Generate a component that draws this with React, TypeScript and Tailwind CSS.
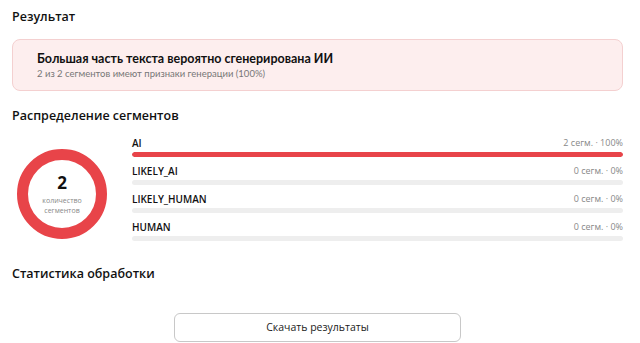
import React from "react";

const rows = [
  { label: "AI", count: 2, pct: 100 },
  { label: "LIKELY_AI", count: 0, pct: 0 },
  { label: "LIKELY_HUMAN", count: 0, pct: 0 },
  { label: "HUMAN", count: 0, pct: 0 },
];

export default function App() {
  return (
    <div className="w-[640px] h-[343px] overflow-hidden bg-white text-[#111]" style={{ fontFamily: '"Open Sans", "Noto Sans", sans-serif' }}>
      <div className="w-[611px] ml-3 flex flex-col">
        <h2 className="text-[12.5px] font-semibold leading-[18px] mt-[8px]">Результат</h2>
        <div className="mt-[13px] h-[52px] rounded-[8px] border border-[#f4d0d0] bg-[#fdeeee] pl-[24px] flex flex-col justify-center" style={{ fontFamily: 'Lato, "Open Sans", sans-serif' }}>
          <div className="text-[12.5px] font-bold leading-[16px]">Большая часть текста вероятно сгенерирована ИИ</div>
          <div className="text-[9.5px] leading-[13px] text-[#777]">2 из 2 сегментов имеют признаки генерации (100%)</div>
        </div>
        <h2 className="text-[12.5px] font-semibold leading-[18px] mt-[16px]">Распределение сегментов</h2>
        <div className="flex mt-[9px]">
          <div className="w-[120px] flex items-start pt-[15px] pl-[5px]">
            <div className="relative w-[90px] h-[90px] rounded-full border-[11px] border-[#e84449] flex flex-col items-center justify-center">
              <div className="text-[17px] font-bold leading-[20px]">2</div>
              <div className="text-[7px] leading-[10px] text-[#888] text-center mt-[3px]">количество<br />сегментов</div>
            </div>
          </div>
          <div className="flex-1 flex flex-col">
            {rows.map((r) => (
              <div key={r.label} className="h-[28px] flex flex-col">
                <div className="flex justify-between items-center h-[18px]">
                  <span className="text-[10px] font-semibold">{r.label}</span>
                  <span className="text-[9px] text-[#888]">{r.count} сегм. · {r.pct}%</span>
                </div>
                <div className="h-[5px] rounded-full bg-[#eeeeee] overflow-hidden">
                  <div className="h-full rounded-full bg-[#e84449]" style={{ width: `${r.pct}%` }} />
                </div>
              </div>
            ))}
          </div>
        </div>
        <h2 className="text-[12.5px] font-semibold leading-[18px] mt-[19px]">Статистика обработки</h2>
        <div className="flex justify-center mt-[30px]">
          <button className="w-[287px] h-[29px] rounded-[6px] border border-[#c8c8c8] bg-white text-[10.5px] text-[#222]">Скачать результаты</button>
        </div>
      </div>
    </div>
  );
}
